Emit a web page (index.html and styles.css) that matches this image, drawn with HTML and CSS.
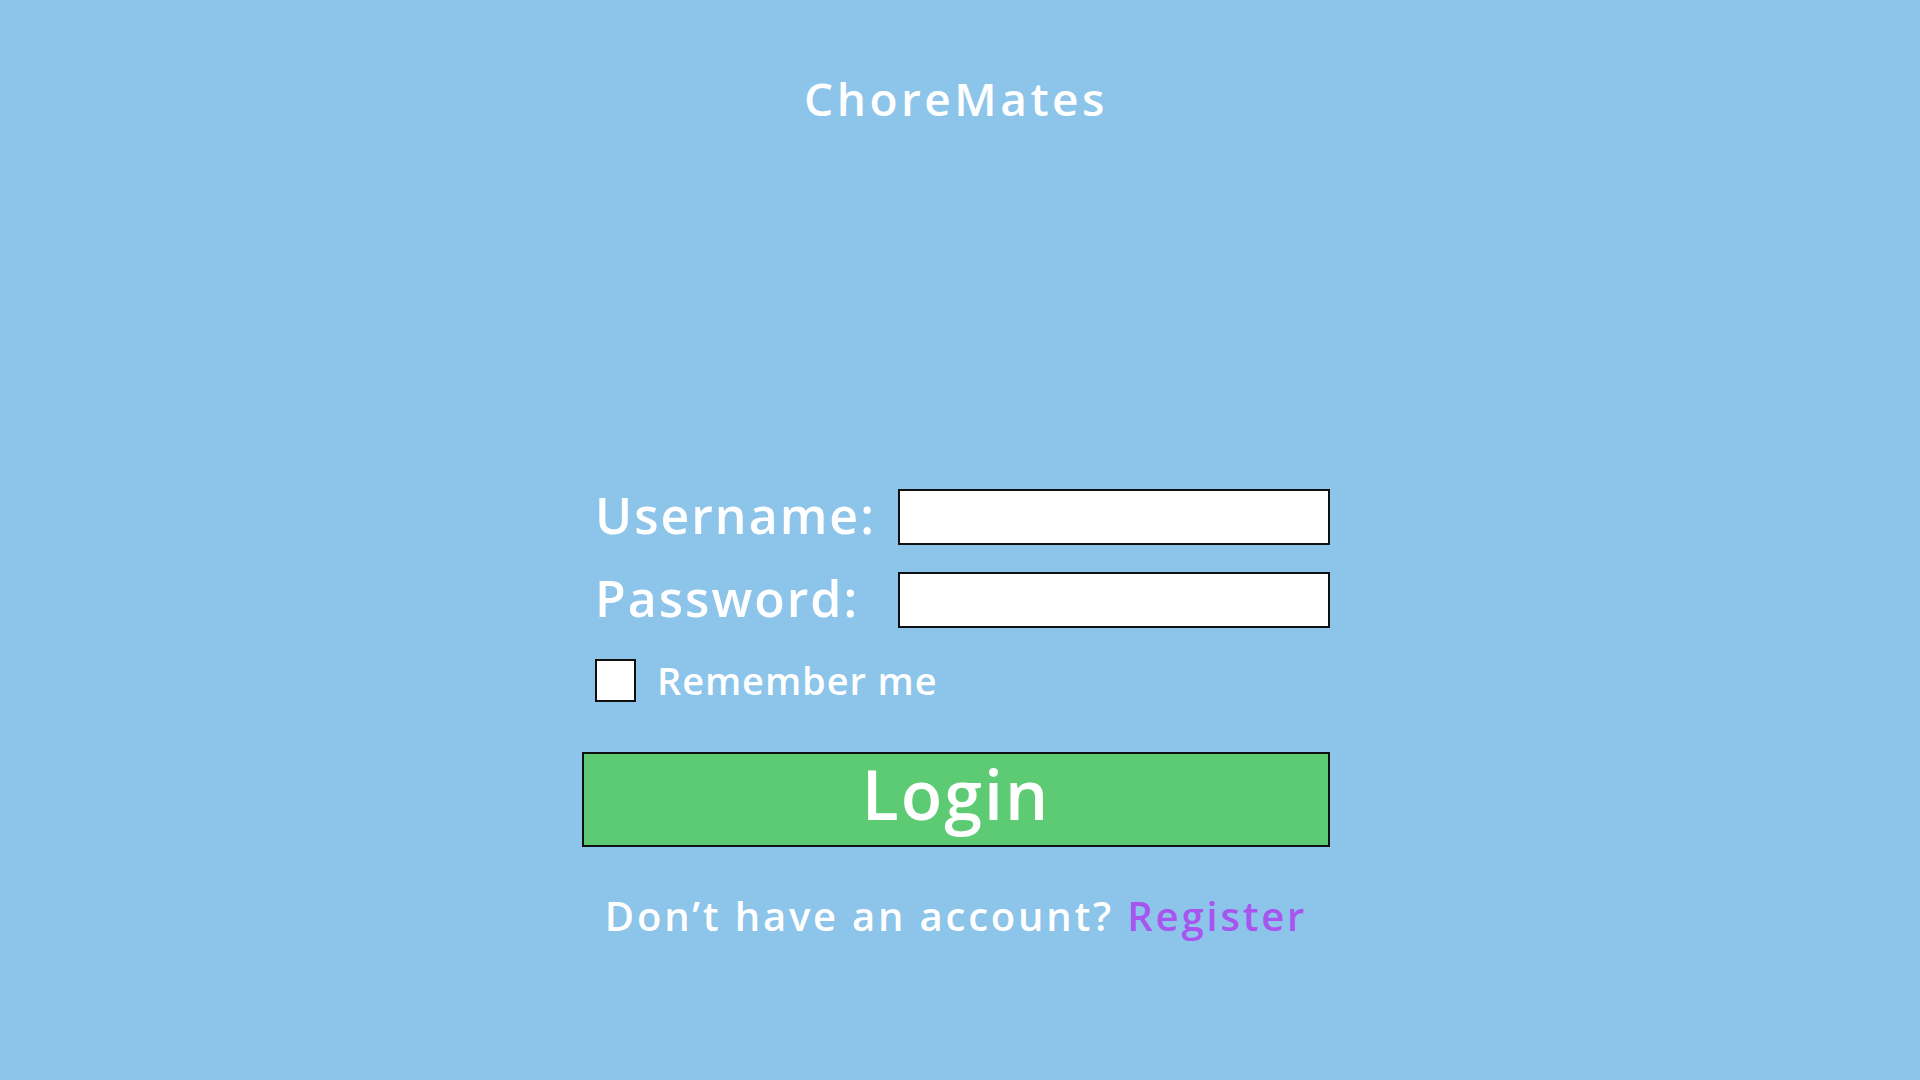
FILE: index.html
```html
<!DOCTYPE html>
<html lang="en">
<head>
<meta charset="utf-8">
<title>ChoreMates</title>
<link rel="stylesheet" href="styles.css">
</head>
<body>
<main class="page">
  <h1 class="title">ChoreMates</h1>
  <form class="login-form">
    <div class="field-row">
      <label class="field-label" for="username">Username:</label>
      <input class="field-input" id="username" type="text">
    </div>
    <div class="field-row">
      <label class="field-label" for="password">Password:</label>
      <input class="field-input" id="password" type="password">
    </div>
    <div class="remember-row">
      <input class="checkbox" id="remember" type="checkbox">
      <label class="remember-label" for="remember">Remember me</label>
    </div>
    <button class="login-button" type="button">Login</button>
  </form>
  <p class="register-line">Don’t have an account? <a class="register-link" href="#">Register</a></p>
</main>
</body>
</html>
```
FILE: styles.css
```css
html, body {
  margin: 0;
  padding: 0;
  background: #8cc4ea;
}
body {
  font-family: "Open Sans", "DejaVu Sans", sans-serif;
  color: #ffffff;
  width: 1920px;
  height: 1080px;
  overflow: hidden;
}
.page {
  width: 1912px;
  display: flex;
  flex-direction: column;
  align-items: center;
}
.title {
  margin: 68px 0 0 0;
  font-size: 46px;
  line-height: 60px;
  font-weight: 600;
  letter-spacing: 3.5px;
}
.login-form {
  width: 748px;
  margin-top: 361px;
  display: flex;
  flex-direction: column;
}
.field-row {
  display: flex;
  align-items: center;
  padding-left: 13px;
  margin-bottom: 27px;
}
.field-row + .field-row {
  margin-bottom: 31px;
}
.field-label {
  width: 303px;
  font-size: 50px;
  line-height: 52px;
  font-weight: 600;
  letter-spacing: 2px;
  padding-bottom: 4px;
}
.field-input {
  box-sizing: border-box;
  width: 432px;
  height: 56px;
  margin: 0;
  border: 2px solid #111;
  background: #fff;
  font-size: 24px;
  padding: 0 8px;
}
.remember-row {
  display: flex;
  align-items: center;
  padding-left: 13px;
  margin-bottom: 50px;
}
.checkbox {
  appearance: none;
  -webkit-appearance: none;
  box-sizing: border-box;
  width: 41px;
  height: 43px;
  margin: 0 21px 0 0;
  border: 2px solid #111;
  background: #fff;
}
.remember-label {
  font-size: 38px;
  line-height: 43px;
  font-weight: 600;
  letter-spacing: 0.9px;
}
.login-button {
  box-sizing: border-box;
  width: 748px;
  height: 95px;
  margin: 0;
  padding: 0 0 16px 0;
  border: 2px solid #111;
  background: #5ccb73;
  color: #fff;
  font-family: "Open Sans", "DejaVu Sans", sans-serif;
  font-size: 68px;
  line-height: 79px;
  font-weight: 600;
  letter-spacing: 2px;
}
.register-line {
  margin: 44px 0 0 0;
  font-size: 40px;
  line-height: 50px;
  font-weight: 600;
  letter-spacing: 2.8px;
}
.register-link {
  color: #a855ef;
  text-decoration: none;
}
```
